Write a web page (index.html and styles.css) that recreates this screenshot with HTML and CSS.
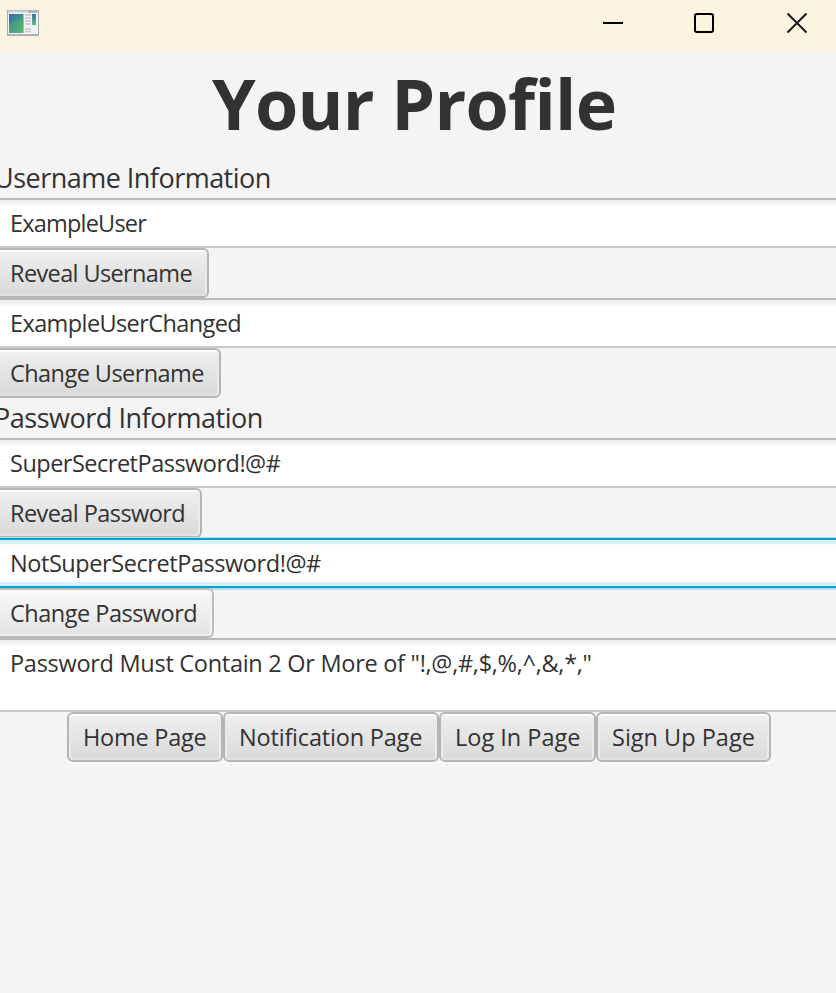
FILE: index.html
```
<!DOCTYPE html>
<html lang="en">
<head>
<meta charset="utf-8">
<title>Your Profile</title>
<link rel="stylesheet" href="styles.css">
</head>
<body>
<header class="titlebar">
  <svg class="app-icon" width="32" height="26" viewBox="0 0 32 26">
    <defs>
      <linearGradient id="pane" x1="0" y1="0" x2="1" y2="1"><stop offset="0" stop-color="#356b9c"/><stop offset=".5" stop-color="#3f9293"/><stop offset="1" stop-color="#55b866"/></linearGradient>
      <linearGradient id="strip" x1="0" y1="0" x2="0" y2="1"><stop offset="0" stop-color="#3a70b4"/><stop offset="1" stop-color="#62bd72"/></linearGradient>
    </defs>
    <rect x=".5" y=".5" width="31" height="25" fill="#f2f3f5" stroke="#a6acb2"/>
    <path d="M1 1.5h30" stroke="#c9d3dc" stroke-width="2"/>
    <path d="M21 1.5h9" stroke="#9ba7ae" stroke-width="2"/>
    <rect x="2" y="4" width="14.500" height="19" fill="url(#pane)"/>
    <path d="M2 16c3-5 8-7 14.500-7v14H2z" fill="#62bd62" opacity=".35"/>
    <path d="M18 5h6M18 8h6M18 11h6M18 14h6M18 19h6M18 21.500h6" stroke="#c4c6c8" stroke-width="1.500"/>
    <rect x="25" y="4" width="4" height="11" fill="url(#strip)"/>
    <path d="M1 24.500h30" stroke="#b5b8bb"/>
  </svg>
  <div class="controls">
    <svg width="22" height="22" viewBox="0 0 22 22"><path d="M1 11h20" stroke="#000" stroke-width="2"/></svg>
    <svg width="22" height="22" viewBox="0 0 22 22"><rect x="1" y="2" width="18" height="18" rx="2" fill="none" stroke="#000" stroke-width="2"/></svg>
    <svg width="22" height="22" viewBox="0 0 22 22"><path d="M1.500 1.500l19 19M20.500 1.500l-19 19" stroke="#111" stroke-width="1.800"/></svg>
  </div>
</header>
<main class="profile">
  <h1 class="title"><span>Your Profile</span></h1>
  <div class="label"><span class="t-ui">Username Information</span></div>
  <div class="field"><span class="t-eu">ExampleUser</span></div>
  <div class="button reveal-user"><span>Reveal Username</span></div>
  <div class="field"><span class="t-euc">ExampleUserChanged</span></div>
  <div class="button change-user"><span>Change Username</span></div>
  <div class="label"><span class="t-pi">Password Information</span></div>
  <div class="field"><span class="t-sp">SuperSecretPassword!@#</span></div>
  <div class="button reveal-pass"><span>Reveal Password</span></div>
  <div class="field focused"><span class="t-nsp">NotSuperSecretPassword!@#</span></div>
  <div class="button change-pass hovered"><span>Change Password</span></div>
  <div class="field area"><span class="t-rule">Password Must Contain 2 Or More of "!,@,#,$,%,^,&amp;,*,"</span></div>
  <nav class="nav">
    <div class="button home"><span>Home Page</span></div>
    <div class="button notification"><span>Notification Page</span></div>
    <div class="button login"><span>Log In Page</span></div>
    <div class="button signup"><span>Sign Up Page</span></div>
  </nav>
</main>
</body>
</html>
```
FILE: styles.css
```
* { box-sizing: border-box; }
body {
  margin: 0;
  height: 993px;
  overflow: hidden;
  background: #f4f4f4;
  color: #323232;
  font: 23.5px/46px "Open Sans", sans-serif;
  white-space: nowrap;
}
svg { display: block; }
.titlebar {
  height: 52px;
  padding: 10px 28px 0 7px;
  display: flex;
  justify-content: space-between;
  background: #f9f3e0;
}
.controls { display: flex; gap: 70px; padding-top: 2px; }
.profile { margin-left: -6px; width: 850px; }
.title {
  margin: 0;
  height: 106px;
  padding-left: 218px;
  font-size: 70px;
  line-height: 102px;
  font-weight: 700;
  letter-spacing: -.75px;
}
.label { height: 40px; padding-left: 0; font-size: 27px; line-height: 40px; }
.field {
  height: 50px;
  padding-left: 16px;
  border-top: 2px solid #b9b9b9;
  border-bottom: 2px solid #cacaca;
  background: linear-gradient(#ececec, #fff 8px);
}
.focused {
  position: relative;
  border-color: #039ed3;
  background: linear-gradient(#d9f0f8 4px, #fafafa 4px, #fff 9px, #fff 42px, #d9f0f8 42px);
  box-shadow: 0 -1px #b5dfed, 0 2px #b5dfed;
}
.area { height: 74px; }
.button {
  height: 50px;
  padding-left: 14px;
  border: 2px solid #b5b5b5;
  border-radius: 6px;
  background: linear-gradient(#efefef, #d9d9d9);
  box-shadow: inset 0 2px #fcfcfc, inset -2px 0 #ebebeb, inset 2px 0 #ebebeb, inset 0 -2px #e1e1e1;
}
.hovered {
  position: relative;
  background: linear-gradient(#fafafa, #e3e3e3);
  border-color: #bcbcbc;
  box-shadow: inset 0 2px #fff, inset -2px 0 #f3f3f3, inset 0 -2px #ececec;
}
.reveal-user { width: 215px; letter-spacing: -.62px; }
.change-user { width: 227px; letter-spacing: -.56px; }
.reveal-pass { width: 208px; letter-spacing: -.57px; }
.change-pass { width: 220px; letter-spacing: -.5px; }
.t-ui { letter-spacing: -.52px; }
.t-eu { letter-spacing: -.8px; }
.t-euc { letter-spacing: -.6px; }
.t-pi { letter-spacing: -.48px; }
.t-sp { letter-spacing: -.5px; }
.t-nsp { letter-spacing: -.43px; }
.t-rule { letter-spacing: -.28px; }
.nav { display: flex; padding-left: 73px; }
.nav .button { box-shadow: inset 0 2px #fcfcfc, inset -2px 0 #ebebeb, inset 2px 0 #ebebeb, inset 0 -2px #e1e1e1, 0 2px #f9f9f9; }
.home { width: 156px; letter-spacing: -.24px; }
.notification { width: 216px; letter-spacing: -.19px; }
.login { width: 157px; }
.signup { width: 175px; }
```
